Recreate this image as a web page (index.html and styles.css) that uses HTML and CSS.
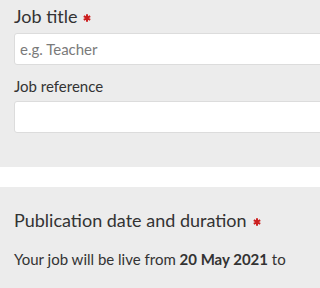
FILE: index.html
```html
<!DOCTYPE html>
<html lang="en">
<head>
<meta charset="utf-8">
<title>Job form</title>
<link rel="stylesheet" href="styles.css">
</head>
<body>
<div class="page">
<section class="panel panel-top">
  <label class="heading" for="title">Job title<svg class="req" viewBox="0 0 8 8" aria-label="required"><path d="M4 0.3V7.7M0.8 2.15L7.2 5.85M0.8 5.85L7.2 2.15"/></svg></label>
  <input class="field" id="title" type="text" placeholder="e.g. Teacher">
  <label class="label" for="ref">Job reference</label>
  <input class="field field-ref" id="ref" type="text">
</section>
<div class="divider"></div>
<section class="panel panel-bottom">
  <h2 class="heading">Publication date and duration<svg class="req" viewBox="0 0 8 8" aria-label="required"><path d="M4 0.3V7.7M0.8 2.15L7.2 5.85M0.8 5.85L7.2 2.15"/></svg></h2>
  <p class="text">Your job will be live from <strong>20 May 2021</strong> to</p>
</section>
</div>
</body>
</html>
```
FILE: styles.css
```css
html, body {
  margin: 0;
  padding: 0;
  overflow: hidden;
}
body {
  background: #ececec;
  font-family: Lato, "Open Sans", sans-serif;
  color: #333333;
}
.page {
  width: 100%;
  overflow: hidden;
}
.panel {
  padding: 0 0 0 14px;
  display: flex;
  flex-direction: column;
  align-items: flex-start;
}
.panel-top {
  padding-top: 4px;
  padding-bottom: 34px;
}
.panel-bottom {
  padding-top: 21px;
}
.heading {
  display: block;
  font-size: 18px;
  line-height: 25px;
  height: 25px;
  font-weight: 400;
  margin: 0;
  white-space: nowrap;
}
.req {
  width: 8px;
  height: 8px;
  margin-left: 6px;
  vertical-align: 1px;
  fill: none;
  stroke: #cc1f1f;
  stroke-width: 2;
}
.label {
  display: block;
  font-size: 15px;
  line-height: 20px;
  margin-top: 11px;
}
.field {
  box-sizing: border-box;
  width: calc(100% + 40px);
  height: 32px;
  margin: 4px 0 0 0;
  padding: 0 5px;
  background: #ffffff;
  border: 1px solid #dcdcdc;
  border-radius: 3px;
  font-family: Lato, "Open Sans", sans-serif;
  font-size: 15px;
  color: #333333;
  outline: none;
}
.field-ref {
  margin-top: 5px;
}
.field::placeholder {
  color: #7a7a7a;
}
.divider {
  height: 20px;
  background: #ffffff;
}
.text {
  font-size: 15px;
  line-height: 20px;
  margin: 16px 0 0 0;
  white-space: nowrap;
}
.text strong {
  font-weight: 700;
}
```
